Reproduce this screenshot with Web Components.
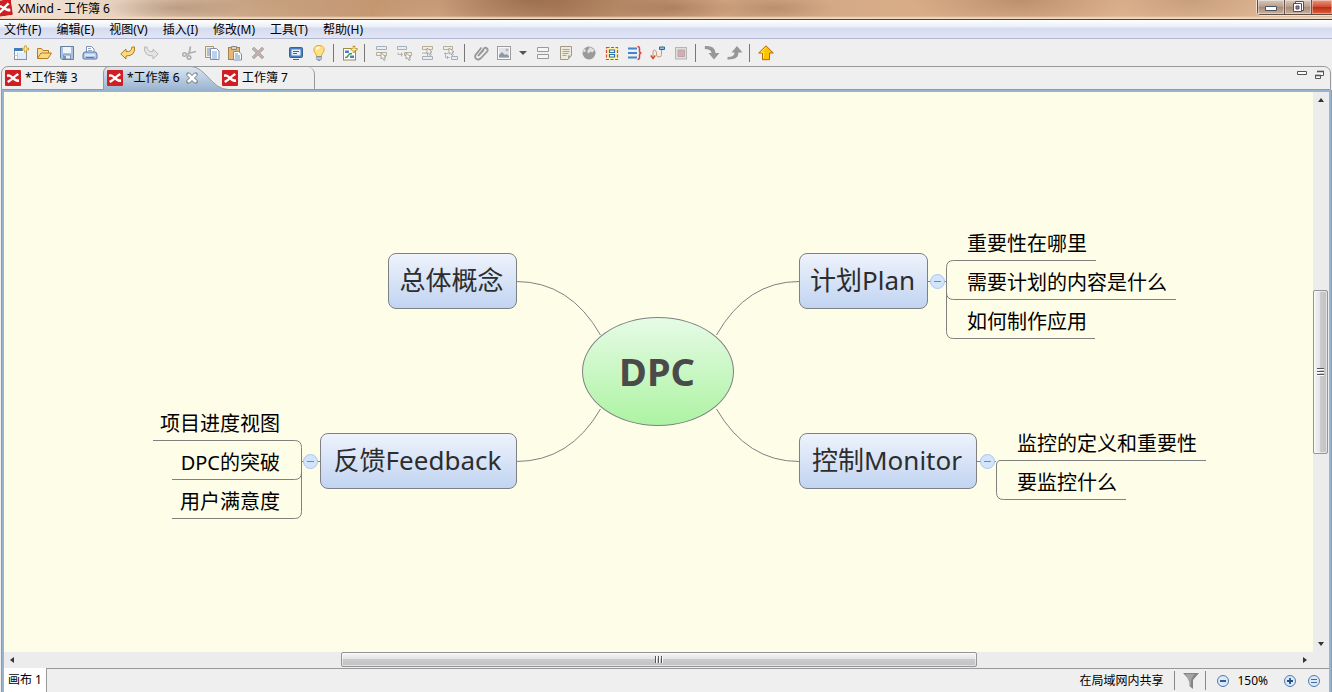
<!DOCTYPE html>
<html lang="zh-CN">
<head>
<meta charset="utf-8">
<title>XMind - 工作簿 6</title>
<style>
html, body { margin: 0; height: 100%; }
body { font: 12px/16px "Noto Sans", "Noto Sans CJK SC", sans-serif; color: #000; background: #efefef; overflow: hidden; }
</style>
</head>
<body>
<app-window></app-window>
<script>
const CURSOR = '<path d="M0 0v6l1.500-1.300 1.500 2.800 1.300-.7L3 4.200 5 4z" fill="#fafafa" stroke="#a09c98" stroke-width=".9"/>';
const ICONS = {
  logo: '<rect width="16" height="16" rx="1" fill="#cf1f23"/><path d="M2 4.500C5 3.500 6 5.500 8 6.500L12.500 3L14 5C12 6 11 7 9.800 8C11.500 9.500 13 9 14 9.500V12C11 12.500 9.500 11 8 9.800L3.500 13L2 11C4 10 5 9 6.200 8.200C5 7 4 6.500 2 7Z" fill="#fff"/>',
  neww: '<rect x="1.500" y="3.500" width="12" height="11" fill="#fff" stroke="#8a9099"/><path d="M1 3h9v3H1z" fill="#3f7cc0"/><path d="M5 7.500h8V14H5z" fill="#dfeefa"/><path d="M4.500 7v7M1.500 10.500h3" stroke="#b9cde2"/><path d="M12.500 .5v7M9 4h7" stroke="#c39b2d" stroke-width="2.600"/><path d="M12.500 1.500v5M10 4h5" stroke="#fff2a6" stroke-width="1.200"/>',
  open: '<path d="M1.500 13.500V3.500h4l1.500 2h5.500v3" fill="#f7dc9a" stroke="#b67c1e"/><path d="M1.500 13.500L5 8h10.500L12 13.500z" fill="#fbd980" stroke="#b67c1e"/>',
  save: '<path d="M1.500 1.500h13v13H3L1.500 13z" fill="#a9c2e2" stroke="#64819f"/><path d="M4 2h8v6H4z" fill="#f1f5fa"/><path d="M4.500 10h7v4h-7z" fill="#e9eef3" stroke="#6c87ab" stroke-width=".8"/><path d="M6 11v3" stroke="#55759f" stroke-width="1.500"/>',
  print: '<path d="M4.500 8V1.500h5l2.500 2.500V8" fill="#fff" stroke="#7b90b5"/><path d="M1 10q0-3 2-3h10q2 0 2 3v3q0 1-1 1H2q-1 0-1-1z" fill="#b5c9e8" stroke="#5874a8"/><path d="M3 10h10" stroke="#e8f2ff" stroke-width="1.500"/><path d="M6 3.500h3M6 5.500h4" stroke="#8fa6ca"/><path d="M4 12.500h8" stroke="#587bb5"/>',
  undo: '<path d="M.8 9L6 4v2.500q5.500 1 6-4.500h2.500q1 9-8.500 9v3z" fill="#fbdc80" stroke="#b57b16" stroke-linejoin="round"/>',
  redo: '<path d="M15.200 9L10 4v2.500q-5.500 1-6-4.500H1.500q-1 9 8.500 9v3z" fill="#e4e4e4" stroke="#b8b8b8" stroke-linejoin="round"/>',
  cut: '<path d="M9.500 1.500L8 9M15 6.500L7 8.500M9 8l-3 1.500" stroke="#b0b0b0" stroke-width="1.800"/><circle cx="3.500" cy="9.500" r="1.800" fill="none" stroke="#aaa" stroke-width="1.400"/><circle cx="8" cy="12.500" r="1.800" fill="none" stroke="#aaa" stroke-width="1.400"/>',
  copy: '<path d="M1.500 1.500h8v11h-8z" fill="#f6efd2" stroke="#9f9a7c"/><path d="M3 4h3M3 6h3M3 8h3M3 10h3" stroke="#6f91c4"/><path d="M6.500 3.500h6l2.500 2.500v8.500H6.500z" fill="#fff" stroke="#7b8dad"/><path d="M8 7h5M8 9h5M8 11h5M8 13h5" stroke="#7b9fd2"/>',
  paste: '<rect x="1.500" y="2.500" width="11" height="12" fill="#e2b87c" stroke="#a8804a"/><path d="M4.500 1.500h5v3h-5z" fill="#d8d4c8" stroke="#888"/><path d="M6.500 6.500h5L14.500 9v6h-8z" fill="#fff" stroke="#7b8dad"/><path d="M8 9h3M8 11h5M8 13h5" stroke="#6691ca"/>',
  del: '<path d="M4 2l4 4 4-4 2 2-4 4 4 4-2 2-4-4-4 4-2-2 4-4-4-4z" fill="#bfb0b0" stroke="#ada3a3" stroke-width=".7"/>',
  screen: '<rect x="1.500" y="2.500" width="13" height="10" rx="1" fill="#4a7fbf" stroke="#346496"/><path d="M3.500 4.500h9v6h-9z" fill="#e8f2fc"/><path d="M5 6.500h6M5 8.500h4" stroke="#316bac"/><path d="M5 14.500h6" stroke="#416b9c"/>',
  bulb: '<path d="M8 .5C1.500 .5 2 6.500 5 9l.6 2.500h4.800L11 9c3-2.500 3.500-8.500-3-8.500z" fill="#ffe084" stroke="#e2a638"/><path d="M5.500 4.500q.8-2 3-2" stroke="#fffbe0" stroke-width="2" fill="none"/><path d="M5.500 11.500h5V14l-1.500 1.500H7L5.500 14z" fill="#9aacc4" stroke="#73849b" stroke-width=".7"/><path d="M5.500 13.200h5" stroke="#e5edf5" stroke-width=".8"/>',
  newmap: '<rect x="1.500" y="3.500" width="12" height="11.500" fill="#fff" stroke="#9a8a55"/><path d="M3 5.500h4v2.500H3zM8 10.500h4V13H8z" fill="#4783bd"/><path d="M3 12.500q3 0 3-2 1-2 4-2" stroke="#529652" fill="none" stroke-width="1.500"/><path d="M12 .8v7M8.500 4.300h7" stroke="#be952e" stroke-width="2.600"/><path d="M12 2v4.600M9.600 4.300h4.800" stroke="#fff0a5" stroke-width="1.200"/>',
  topic: '<path d="M3.500 1.500h10v3h-10z" fill="#e6edf4" stroke="#a3afbb"/><path d="M3.500 7.500h10v3h-10z" fill="#f2eee0" stroke="#b5ae99"/><g transform="translate(8 8)">' + CURSOR + '</g>',
  subtopic: '<path d="M1.500 1.500h9v3h-9z" fill="#e6edf4" stroke="#a3afbb"/><path d="M8.500 7.500h7v3h-7z" fill="#f2eee0" stroke="#b5ae99"/><path d="M2 7.500v2h5M5.500 7.500v4" stroke="#b2b2b2" fill="none"/><g transform="translate(10 8)">' + CURSOR + '</g>',
  before: '<path d="M3.500 1.500h10v3h-10z" fill="#f2eee0" stroke="#b5ae99"/><path d="M3.500 11.500h10v3h-10z" fill="#e6edf4" stroke="#a3afbb"/><path d="M3 8h6M8.500 8v3" stroke="#b5ae99"/><g transform="translate(8 3)">' + CURSOR + '</g>',
  parent: '<path d="M1.500 1.500h9v3h-9z" fill="#f2eee0" stroke="#b5ae99"/><path d="M9.500 11.500h6v3h-6z" fill="#e6edf4" stroke="#a3afbb"/><path d="M3.500 7.500v5h4M2 8.500h4M5.500 11v3" stroke="#b8b2a0" fill="none"/><g transform="translate(7 3)">' + CURSOR + '</g>',
  clip: '<path d="M5 11L11 3.500q1.500-1.500 3 0t0 3.200L7.500 13.500q-2 1.800-4.300.3-2-2-.4-4.200L8.500 2.500" fill="none" stroke="#999" stroke-width="1.800"/><path d="M5.500 10.500L11 5" stroke="#999" stroke-width="1.500"/>',
  image: '<rect x="1.500" y="1.500" width="13" height="13" fill="#f7f7f7" stroke="#9d9d9d"/><path d="M3 3h10v10H3z" fill="#dfe4e8"/><path d="M3 12.500V10l3-3 3 3 1.500-1L13 11v1.500z" fill="#8c99a5"/><path d="M11 3.500v3M9.500 5h3" stroke="#c9979c"/>',
  rows: '<path d="M2.500 2.500h11v4h-11zM2.500 9.500h11v4h-11z" fill="#f5f5f5" stroke="#999"/>',
  note: '<path d="M2.500 1.500h11v9L10 14.500H2.500z" fill="#efebdc" stroke="#a09b88"/><path d="M4.500 4.500h7M4.500 6.500h7M4.500 8.500h6M4.500 10.500h4" stroke="#aaa48f"/><path d="M10 14.500v-4h3.500z" fill="#aaa48b"/>',
  globe: '<circle cx="8" cy="8" r="6.500" fill="#9a9a9a"/><path d="M9 2l4.500 3-2 2.500-2-1-2 2-1.500-2zM3 4l2 1-1 2-2 0z" fill="#e0e0e0"/>',
  boundary: '<rect x="2.500" y="2.500" width="11" height="12" fill="#fff3a0" stroke="#d8453a" stroke-dasharray="3 1.500" stroke-width="1.200"/><path d="M5.500 5h5v2.500h-5zM5.500 9.500h5V12h-5z" fill="#fff" stroke="#2f6eaf" stroke-width="1.200"/>',
  summary: '<path d="M1 3.500h9M1 8h9M1 12.500h9" stroke="#4584c8" stroke-width="2"/><path d="M10.500 1.500q2 0 2 2V6q0 2 2 2-2 0-2 2v2.500q0 2-2 2" fill="none" stroke="#dc4048" stroke-width="1.500"/>',
  relation: '<path d="M9.500 2h5v2.500h-5z" fill="#8cc0e0" stroke="#2f6a90"/><path d="M3 12V7q0-2 1.500-2T6.500 8v2q0 2 2.500 2 2.500 0 2.500-2.500V5" fill="none" stroke="#d39273"/><path d="M.8 10.500L3 13.500l2.200-3" fill="none" stroke="#d04a2a" stroke-width="1.500"/>',
  square: '<rect x="2.500" y="2.500" width="11" height="11.500" fill="#dedede" stroke="#b4b4b4"/><path d="M5 5h6.500v6.500H5z" fill="#cdb0b3" stroke="#bfa5a8"/>',
  down: '<path d="M.8 1Q11 0 11.500 8H15.500l-5.500 6.500L4.500 8h3Q7 4 .8 4z" fill="#979797"/>',
  up: '<path d="M.5 14.500q11 .5 11-7H15.500L10 1 4.500 7.500h3q0 4.500-7 4.500z" fill="#979797"/>',
  upload: '<path d="M8 .8L15.300 8H11.500v6.700h-7V8H.7z" fill="#ffc400" stroke="#b9650b" stroke-linejoin="round"/><path d="M8 2.500L3 7.200h2.500V13" fill="none" stroke="#ffea6d"/>',
  caret: '<path d="M4 6h8L8 10z" fill="#555"/>',
  funnel: '<path d="M0 0h16L10 7v9L6.500 13V7z" fill="#858585"/><path d="M2.500 1h9L8 6.500V13" fill="#a5a5a5"/>',
  minus: '<circle cx="8" cy="8" r="5.500" fill="#d9eaf8" stroke="#547aaa"/><path d="M5 8h6" stroke="#1f4f8c" stroke-width="1.800"/>',
  plus: '<circle cx="8" cy="8" r="5.500" fill="#d9eaf8" stroke="#547aaa"/><path d="M5 8h6M8 5v6" stroke="#1f4f8c" stroke-width="1.800"/>',
  equal: '<circle cx="8" cy="8" r="5.500" fill="#d9eaf8" stroke="#547aaa"/><path d="M5 6.500h6M5 9.500h6" stroke="#416ba1" stroke-width="1.200"/>',
  close: '<path d="M3 3h2.500L8 5.500 10.500 3H13v2.500L10.500 8 13 10.500V13h-2.500L8 10.500 5.500 13H3v-2.500L5.500 8 3 5.500z" fill="#fff" stroke="#5d6670" stroke-width=".9"/>',
  minview: '<path d="M3.500 4.500h9v3h-9z" fill="#fff" stroke="#555"/>',
  restoreview: '<path d="M6.500 5v-.5h6v4H10" fill="#fff" stroke="#555"/><path d="M6 4.500h7" stroke="#555" stroke-width="1.600"/><path d="M4.500 8.500h5v3h-5z" fill="#fff" stroke="#555"/><path d="M4 8.500h6" stroke="#555" stroke-width="1.600"/>',
  winmin: '<path d="M2.500 6.500h11v4h-11z" fill="#fff" stroke="#4b5164"/>',
  winmax: '<path d="M5.500 1.500h8v9h-8z" fill="#fff" stroke="#4b5164"/><path d="M3.500 3.500h8v8h-8z" fill="#fff" stroke="#4b5164"/><path d="M6 6h3v3H6z" fill="#a78" stroke="#4b5164"/>'
};

function define(name, html, setup) {
  const template = document.createElement('template');
  template.innerHTML = html;
  customElements.define(name, class extends HTMLElement {
    constructor() {
      super();
      this.attachShadow({ mode: 'open' }).append(template.content.cloneNode(true));
    }
    connectedCallback() { if (setup) setup(this, this.shadowRoot); }
  });
}
const RESET = 'button{font:inherit;color:inherit;background:none;border:0;margin:0;padding:0}';

define('ui-icon', '<style>:host{display:block;width:16px;height:16px;flex:none}svg{display:block}</style><svg width="16" height="16" viewBox="0 0 16 16" fill="none" aria-hidden="true"></svg>',
  (el, root) => { root.querySelector('svg').innerHTML = ICONS[el.getAttribute('name')] || ''; });

define('tool-button', `<style>${RESET}:host{display:block;width:23px;flex:none}:host([narrow]){width:16px}
  button{display:flex;width:100%;height:24px;align-items:center;justify-content:center}</style><button></button>`,
  (el, root) => {
    const button = root.querySelector('button');
    button.setAttribute('aria-label', el.getAttribute('label'));
    button.innerHTML = `<ui-icon name="${el.getAttribute('icon')}"></ui-icon>`;
  });

define('title-bar', `<style>${RESET}
  :host{display:flex;justify-content:space-between;height:19px;border-bottom:1px solid #5a4033;overflow:hidden;
    background:linear-gradient(#0000 16px,#f3d9bf 18px),
    radial-gradient(ellipse 70px 12px at 175px 8px,#86644c55,#0000),
    radial-gradient(ellipse 180px 40px at 260px 0,#a7784f44,#0000),
    radial-gradient(ellipse 160px 40px at 530px 0,#6d3f2477,#0000),
    radial-gradient(ellipse 60px 14px at 675px 8px,#79513a55,#0000),
    radial-gradient(ellipse 60px 14px at 775px 8px,#8a624955,#0000),
    radial-gradient(ellipse 110px 30px at 1020px 0,#9a6b4a77,#0000),
    radial-gradient(ellipse 80px 24px at 1190px 0,#a1755655,#0000),
    linear-gradient(90deg,#f3e6da,#e8d4c2 9%,#d3b295 18%,#c79a74 28%,#dbb18c 33%,#c2946f 42%,#d3a985 60%,#dbb08a 75%,#dcb491 94%,#cbb5a2)}
  .name{display:flex;gap:6px;line-height:18px}
  .name ui-icon{margin-left:-4px;transform:rotate(-8deg)}
  .win{display:flex;height:14px;border:1px solid #5c4c44;border-top:0;border-right:0;border-radius:0 0 0 4px;box-shadow:0 0 0 1px #f5e2d1}
  .win button{width:27px;display:flex;justify-content:center;align-items:flex-start;border-right:1px solid #6b5349;background:linear-gradient(#d9c8bb,#b79c88 50%,#a68a76 51%,#cbb19d);box-shadow:inset 0 0 0 1px #ffffff66}
  .win button:last-child{width:20px;border:0;background:linear-gradient(#e69b84,#cf4a2c 50%,#b92c12 51%,#e0623a)}
  </style><div class="name"><ui-icon name="logo"></ui-icon><span>XMind - 工作簿 6</span></div>
  <div class="win"><button aria-label="最小化"><ui-icon name="winmin"></ui-icon></button><button aria-label="还原"><ui-icon name="winmax"></ui-icon></button><button aria-label="关闭"></button></div>`);

define('menu-bar', `<style>${RESET}:host{display:flex;gap:15px;height:18px;padding-left:4px;border-bottom:1px solid #b3b8d2;background:linear-gradient(#fff,#e9eef7 7px,#d5dbee 8px,#e1e6f6)}
  button{line-height:20px;white-space:nowrap}</style>
  <button>文件(F)</button><button>编辑(E)</button><button>视图(V)</button><button>插入(I)</button><button>修改(M)</button><button>工具(T)</button><button>帮助(H)</button>`);

const tool = (icon, label) => `<tool-button icon="${icon}" label="${label}"></tool-button>`;
define('tool-bar', `<style>:host{display:flex;align-items:center;height:27px;padding-left:9px;background:#efefef}
  i{width:15px;flex:none}hr{flex:none;width:1px;height:18px;border:0;background:#777;margin:0 4px 0 3px}</style>
  ${tool('neww','新建')}${tool('open','打开')}${tool('save','保存')}${tool('print','打印')}<i></i>
  ${tool('undo','撤销')}${tool('redo','重做')}<i></i>
  ${tool('cut','剪切')}${tool('copy','复制')}${tool('paste','粘贴')}${tool('del','删除')}<i></i>
  ${tool('screen','演示')}${tool('bulb','头脑风暴')}<hr>${tool('newmap','新画布')}<hr>
  ${tool('topic','主题')}${tool('subtopic','子主题')}${tool('before','前置主题')}${tool('parent','父主题')}<hr>
  ${tool('clip','附件')}${tool('image','图片')}<tool-button narrow icon="caret" label="更多图片"></tool-button>${tool('rows','标签')}${tool('note','备注')}${tool('globe','超链接')}${tool('boundary','外框')}${tool('summary','概要')}${tool('relation','联系')}${tool('square','录音')}<hr>
  ${tool('down','下钻')}${tool('up','上钻')}<hr>${tool('upload','上传')}`);

define('editor-tab', `<style>${RESET}
  :host{display:block;position:relative;flex:none;height:22px}
  button{position:relative;display:flex;align-items:center;gap:4px;height:22px;padding-left:4px;line-height:24px;white-space:nowrap}
  svg{position:absolute;left:0;top:-1px;display:none}
  :host([active]) svg{display:block}
  .x{display:none}:host([active]) .x{display:block}</style>
  <svg width="130" height="24" viewBox="0 0 130 24" aria-hidden="true"><defs><linearGradient id="g" x2="0" y2="1"><stop stop-color="#dde7f1"/><stop offset="1" stop-color="#99b4d1"/></linearGradient></defs><path d="M.5 24V7Q.5 .5 7 .5H88C102 .5 109 23.500 125 23.500V24Z" fill="url(#g)"/><path d="M.5 24V7Q.5 .5 7 .5H88C102 .5 109 23.500 125 23.500" fill="none" stroke="#9a9a9a"/></svg>
  <button role="tab"><ui-icon name="logo"></ui-icon><slot></slot><ui-icon class="x" name="close"></ui-icon></button>`);

define('editor-tabs', `<style>${RESET}
  :host{display:flex;justify-content:space-between;height:22px;margin:0 1px;border:1px solid #999;border-radius:7px 7px 0 0}
  .tabs{display:flex;padding-right:26px;border-right:1px solid #999;border-radius:0 7px 0 0}
  .a{width:101px;margin-left:-1px}.b{width:115px;margin-left:1px}.tools{display:flex;padding:0 3px 0 0;gap:1px}.tools button{height:16px}</style>
  <div class="tabs" role="tablist"><editor-tab class="a">*工作簿 3</editor-tab><editor-tab class="b" active>*工作簿 6</editor-tab><editor-tab>工作簿 7</editor-tab></div>
  <div class="tools"><button aria-label="最小化视图"><ui-icon name="minview"></ui-icon></button><button aria-label="还原视图"><ui-icon name="restoreview"></ui-icon></button></div>`);

define('scroll-bar', `<style>${RESET}
  :host{display:flex;height:16px;background:#ececec}
  :host([vertical]){flex-direction:column;width:16px;height:auto}
  button{flex:none;width:16px;height:16px;display:grid;place-items:center}
  button::before{content:"";border:3px solid #0000;border-right:4px solid #333;border-left:0}
  button:last-child::before{border-right:0;border-left:4px solid #333}
  :host([vertical]) button::before{border:3px solid #0000;border-bottom:4px solid #333;border-top:0}
  :host([vertical]) button:last-child::before{border-bottom:0;border-top:4px solid #333}
  .s{flex:321 1 0}.t{flex:635 1 0;display:grid;place-items:center;box-sizing:border-box;border:1px solid #939599;border-radius:2px;margin:0 0 1px;background:linear-gradient(#f5f5f5,#e4e4e5 45%,#cbcbcd 50%,#c2c2c4);box-shadow:inset 0 0 0 1px #ffffff88}
  .t::after{content:"";width:8px;height:7px;background:repeating-linear-gradient(90deg,#555 0 1px,#fff 1px 2px,#0000 2px 3px)}
  :host([vertical]) .s{flex:182 1 0}:host([vertical]) .t{flex:162 1 0;margin:0 1px 0 0;background:linear-gradient(90deg,#f5f5f5,#e4e4e5 45%,#cbcbcd 50%,#c2c2c4)}
  :host([vertical]) .t::after{width:7px;height:8px;background:repeating-linear-gradient(#555 0 1px,#fff 1px 2px,#0000 2px 3px)}
  </style><button aria-label="向前"></button><div class="s"></div><div class="t"></div><div class="s"></div><button aria-label="向后"></button>`);

define('map-topic', `<style>
  :host{position:absolute;box-sizing:border-box;display:grid;place-items:center;height:56px;padding:0 2px 2px 0;border:1px solid #7f8084;border-radius:8px;background:linear-gradient(#eef3fc,#c1d4f1);
    font-size:26px;line-height:40px;color:#2d2d2d;white-space:nowrap}
  :host([central]){height:109px;border-radius:50%;background:linear-gradient(#e6fbe6,#adf3a2);font-size:38px;font-weight:700;color:#4a4a4a}
  </style><slot></slot>`);

define('map-fold', `<style>${RESET}:host{position:absolute;width:15px;height:15px}
  button{display:grid;place-items:center;width:15px;height:15px;box-sizing:border-box;border:1px solid #a9c6f0;border-radius:50%;background:#d3e4fd}
  button::before{content:"";width:7px;height:1px;background:#7189ad}</style><button aria-label="折叠"></button>`);

define('map-branch', `<style>:host{position:absolute;display:block;font-size:20px;line-height:39px;white-space:nowrap;color:#000}
  :host([left]){text-align:right}::slotted(span){display:block}</style><slot></slot>`);

define('mind-map', `<style>
  :host{display:grid;place-content:center;min-width:0;min-height:0;overflow:hidden;background:#fefde8}
  .map{position:relative;width:1121px;height:300px}
  .lines{position:absolute;left:0;top:0}
  </style><div class="map">
  <svg class="lines" width="1121" height="300" viewBox="0 0 1121 300" fill="none" stroke="#808080" aria-hidden="true">
    <path d="M418 59.500Q472 59.500 502.500 113M418 239.500Q472 239.500 502.500 187M701 59.500Q649 59.500 618.500 113M701 239.500Q649 239.500 618.500 187"/>
    <path d="M829 59.500H848.500M998 38.500H855.500Q848.500 38.500 848.500 45.500V109.500Q848.500 116.500 855.500 116.500H997M848.500 70.500Q848.500 77.500 855.500 77.500H1078"/>
    <path d="M878 239.500H898M1108 238.500H903Q898.500 238.500 898.500 243V270.500Q898.500 277.500 905.500 277.500H1028"/>
    <path d="M222 239.500H203.500M55 218.500H196.500Q203.500 218.500 203.500 225.500V289.500Q203.500 296.500 196.500 296.500H74M203.500 250.500Q203.500 257.500 196.500 257.500H74"/>
  </svg>
  <map-topic style="left:290px;top:31px;width:129px">总体概念</map-topic>
  <map-topic style="left:222px;top:211px;width:197px">反馈Feedback</map-topic>
  <map-topic style="left:701px;top:31px;width:129px">计划Plan</map-topic>
  <map-topic style="left:701px;top:211px;width:178px">控制Monitor</map-topic>
  <map-topic central style="left:484px;top:95px;width:152px">DPC</map-topic>
  <map-fold style="left:832px;top:52px"></map-fold><map-fold style="left:882px;top:232px"></map-fold><map-fold style="left:205px;top:232px"></map-fold>
  <map-branch style="left:869px;top:2px"><span>重要性在哪里</span><span>需要计划的内容是什么</span><span>如何制作应用</span></map-branch>
  <map-branch style="left:919px;top:202px"><span>监控的定义和重要性</span><span>要监控什么</span></map-branch>
  <map-branch left style="right:939px;top:182px"><span>项目进度视图</span><span>DPC的突破</span><span>用户满意度</span></map-branch>
  </div>`);

define('status-bar', `<style>${RESET}
  :host{display:flex;height:24px;background:#efefef}
  .sheet{width:43px;flex:none;background:#fff;border-right:1px solid #999;text-align:center}
  .rest{flex:1;display:flex;align-items:center;justify-content:flex-end;border-top:1px solid #999;padding-right:7px}
  hr{width:1px;height:19px;border:0;margin:0 8px 0 11px;background:#888}hr+button+hr{margin:0 9px 0 6px}
  output{margin:0 14px 0 6px}.plus{margin-right:8px}
  </style><button class="sheet">画布 1</button><div class="rest"><span>在局域网内共享</span><hr><button aria-label="筛选"><ui-icon name="funnel"></ui-icon></button><hr><button aria-label="缩小"><ui-icon name="minus"></ui-icon></button><output>150%</output><button class="plus" aria-label="放大"><ui-icon name="plus"></ui-icon></button><button aria-label="实际大小"><ui-icon name="equal"></ui-icon></button></div>`);

define('app-window', `<style>
  :host{display:flex;flex-direction:column;height:100vh}
  title-bar,menu-bar,tool-bar,editor-tabs{flex:none}
  .frame{flex:1;min-height:0;display:flex;flex-direction:column;margin-left:1px;border:1px solid #999;border-width:0 1px;box-sizing:border-box}
  .inner{flex:1;min-height:0;display:flex;flex-direction:column;border:2px solid #99b4d1;border-bottom:0}
  .view{flex:1;min-height:0;display:grid;grid-template-columns:minmax(0,1fr) 16px;grid-template-rows:minmax(0,1fr) 16px;background:#ececec}
  </style><title-bar></title-bar><menu-bar></menu-bar><tool-bar></tool-bar><editor-tabs></editor-tabs>
  <div class="frame"><div class="inner"><div class="view"><mind-map></mind-map><scroll-bar vertical></scroll-bar><scroll-bar></scroll-bar></div><status-bar></status-bar></div></div>`);
</script>
</body>
</html>
